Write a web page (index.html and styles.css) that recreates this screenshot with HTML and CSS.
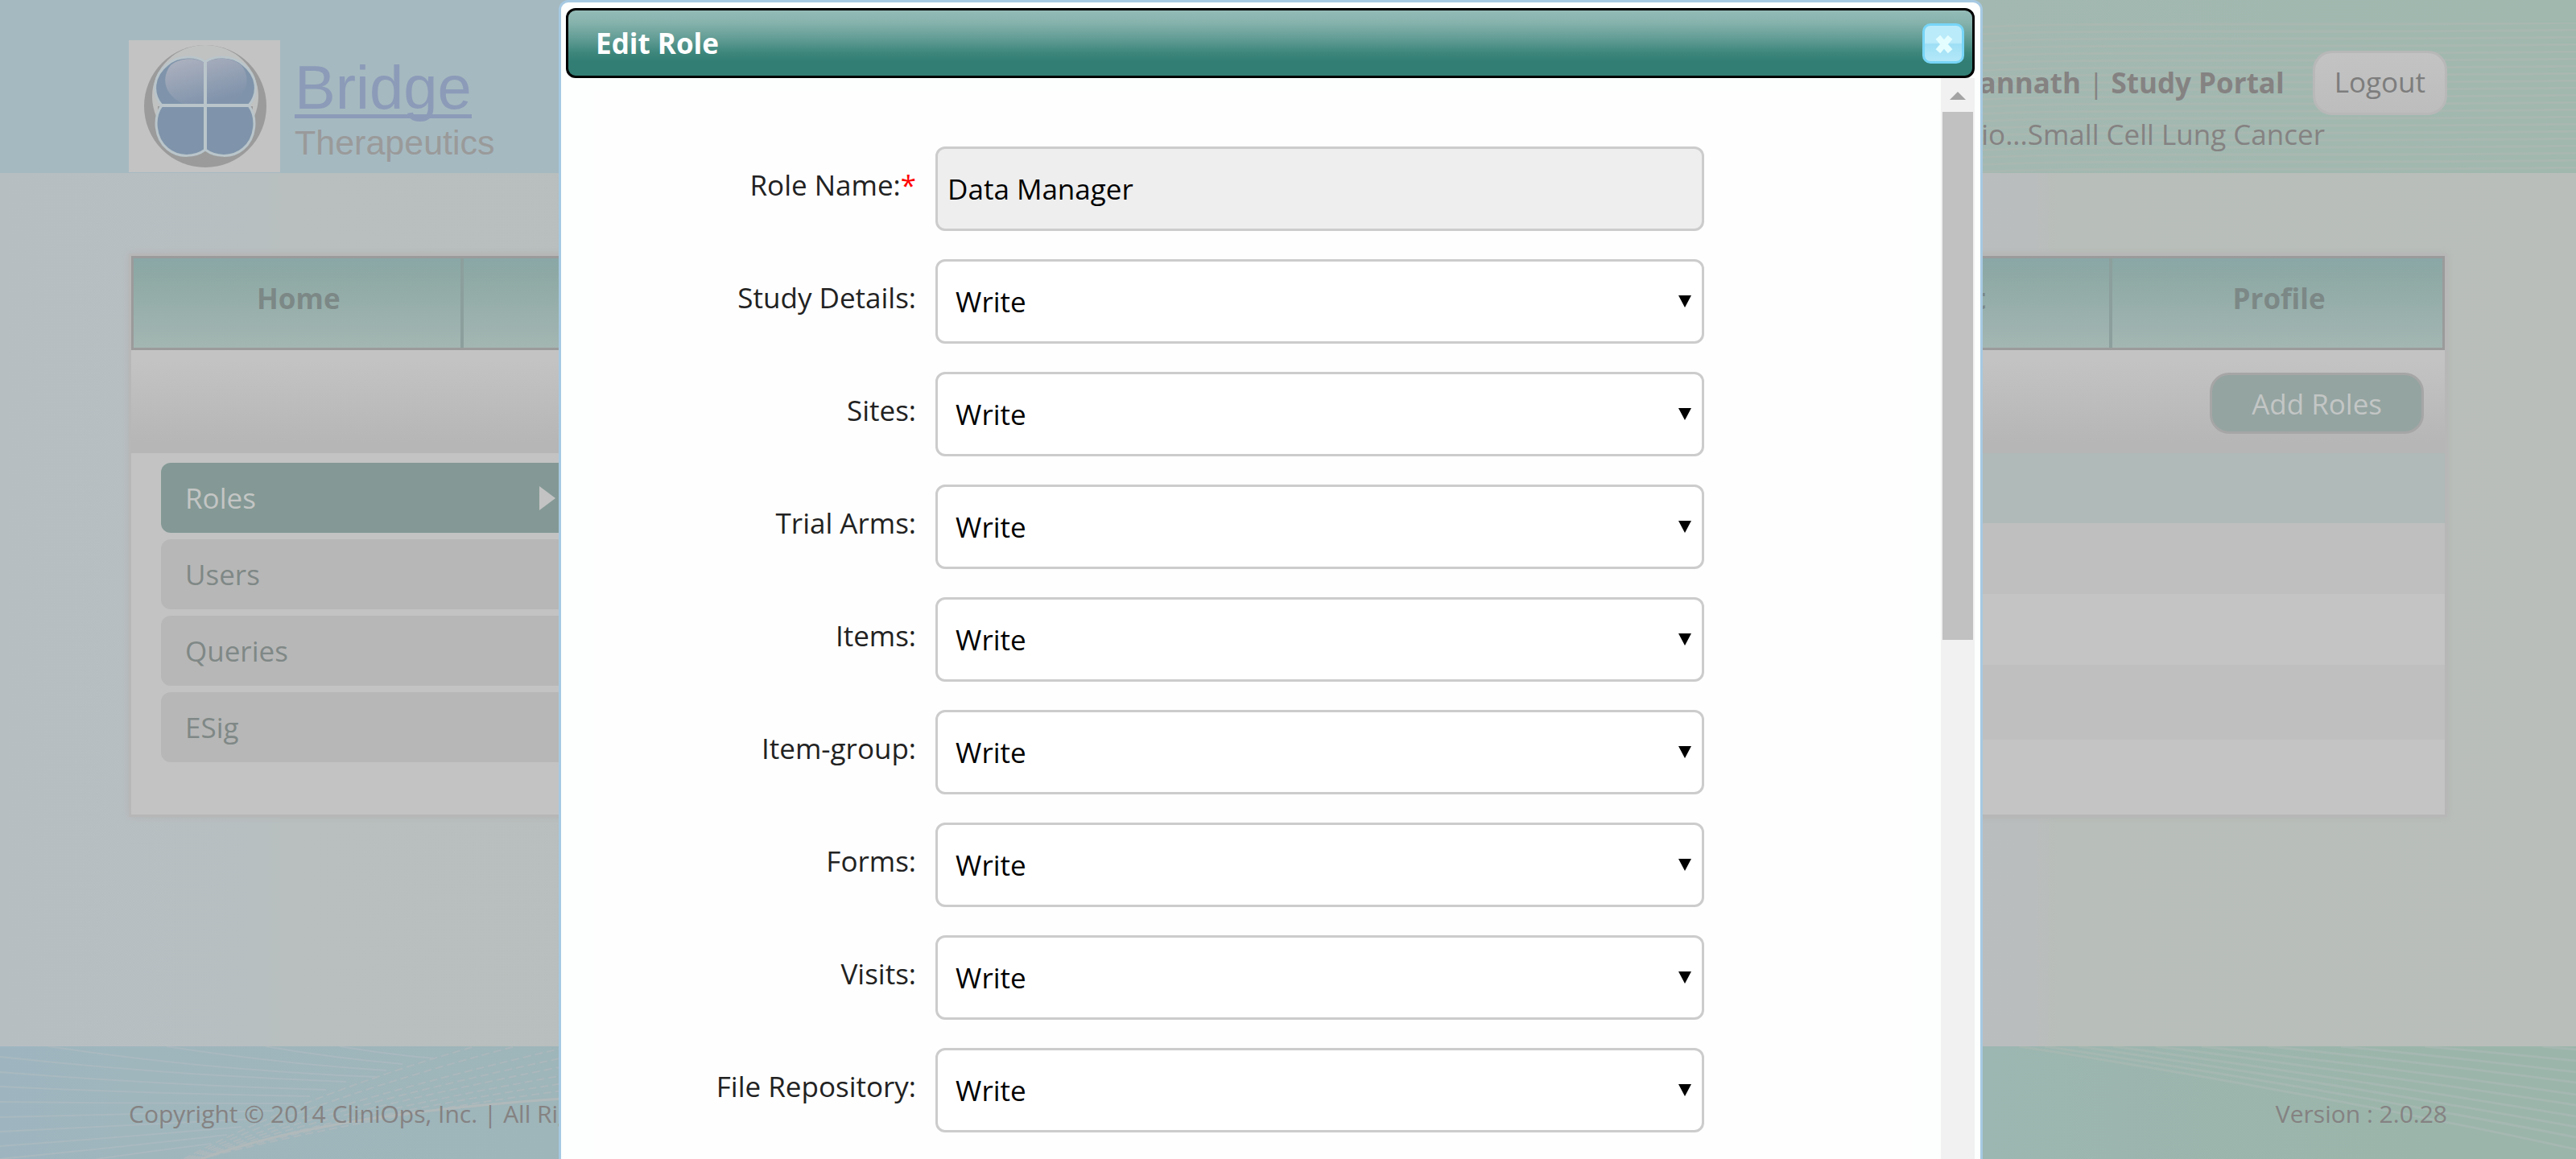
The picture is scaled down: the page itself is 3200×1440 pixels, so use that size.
FILE: index.html
```html
<!DOCTYPE html>
<html lang="en">
<head>
<meta charset="utf-8">
<title>Edit Role</title>
<link rel="stylesheet" href="styles.css">
</head>
<body>
<div class="page">
  <header class="site-header">
    <svg class="header-lines" viewBox="0 0 740 215" preserveAspectRatio="none" aria-hidden="true">
      <defs>
        <pattern id="ripple" width="740" height="9" patternUnits="userSpaceOnUse">
          <path d="M0 8 C80 3 180 3 340 3 S640 3 740 1" fill="none" stroke="#a9b8b1" stroke-width="3"/>
        </pattern>
      </defs>
      <rect y="28" width="740" height="187" fill="url(#ripple)"/>
    </svg>
    <a class="logo" href="#">
      <svg class="logo-mark" viewBox="0 0 188 164" aria-hidden="true">
        <defs>
          <linearGradient id="gloss" x1="0" y1="0" x2="0.5" y2="1">
            <stop offset="0" stop-color="#afb3c0"/>
            <stop offset="1" stop-color="#8093ab"/>
          </linearGradient>
        </defs>
        <rect width="188" height="164" fill="#c3c3c3"/>
        <circle cx="95" cy="82" r="76" fill="#9b9b9b"/>
        <ellipse cx="95" cy="70" rx="66" ry="64" fill="#c0c1c1"/>
        <path d="M36 82 H154 V100 L95 150 L36 100 Z" fill="#9b9b9b"/>
        <path d="M95 27 C85 19 62 18 48 30 C30 44 28 66 41 81 C30 96 32 122 48 135 C62 147 83 145 95 136 C107 145 128 147 142 135 C158 122 160 96 149 81 C162 66 160 44 142 30 C128 18 105 19 95 27 Z" fill="#7f94aa" stroke="#b9c5ca" stroke-width="3"/>
        <path d="M95 29 C85 21 64 21 52 31 C40 46 43 68 68 79 H125 C146 70 153 48 140 31 C126 20 105 21 95 29 Z" fill="url(#gloss)"/>
        <path d="M95 27 V136 M41 81 H149" stroke="#b9c5ca" stroke-width="4"/>
      </svg>
      <span class="wordmark">
        <span class="wordmark-name">Bridge</span>
        <span class="wordmark-sub">Therapeutics</span>
      </span>
    </a>
    <div class="account">
      <div class="account-row">
        <p class="account-user"><b>Jagannath</b> | <b>Study Portal</b></p>
        <button class="logout" type="button">Logout</button>
      </div>
      <p class="account-study">Bio...Small Cell Lung Cancer</p>
    </div>
  </header>

  <main class="content">
    <div class="panel">
      <nav class="tabs">
        <a href="#">Home</a><a href="#"></a><a href="#"></a><a href="#"></a><a href="#"></a><a href="#">Audit</a><a href="#">Profile</a>
      </nav>
      <div class="toolbar"><button class="add" type="button">Add Roles</button></div>
      <div class="columns">
        <ul class="side">
          <li><a class="active" href="#">Roles<span class="pointer"></span></a></li>
          <li><a href="#">Users</a></li>
          <li><a href="#">Queries</a></li>
          <li><a href="#">ESig</a></li>
        </ul>
        <div class="grid">
          <div class="grid-head"></div>
          <div class="grid-row odd"></div>
          <div class="grid-row"></div>
          <div class="grid-row tall odd"></div>
          <div class="grid-row tall"></div>
        </div>
      </div>
    </div>
  </main>

  <footer class="site-footer">
    <svg class="footer-lines" viewBox="0 0 3200 140" preserveAspectRatio="none" aria-hidden="true">
      <g fill="none" stroke="#a9b9bf" stroke-width="2">
        <path d="M422 0 Q480 10 540 15"/>
        <path d="M330 0 Q410 14 500 22"/>
        <path d="M207 0 Q340 21 480 30"/>
        <path d="M60 0 Q260 30 468 38"/>
        <path d="M0 13 Q210 36 430 44"/>
        <path d="M0 32 Q200 48 405 54"/>
        <path d="M0 50 Q190 59 385 62"/>
        <path d="M0 69 Q180 71 365 71"/>
        <path d="M0 88 Q160 84 340 80"/>
        <path d="M0 106 Q150 99 320 90"/>
        <path d="M0 124 Q140 114 300 100"/>
        <path d="M0 140 Q140 126 282 110"/>
        <path d="M120 140 Q190 130 262 121"/>
      </g>
      <g fill="none" stroke="#abb8bc" stroke-width="2" stroke-dasharray="10 5">
        <path d="M228 140 Q380 60 590 0"/>
        <path d="M231 140 Q390 66 640 0"/>
        <path d="M234 140 Q400 72 700 2"/>
        <path d="M237 140 Q410 76 700 14"/>
        <path d="M240 140 Q420 80 700 25"/>
        <path d="M243 140 Q430 84 700 36"/>
        <path d="M246 140 Q440 86 700 46"/>
        <path d="M248 140 Q450 88 700 55"/>
      </g>
      <path d="M250 140 Q400 85 700 65" fill="none" stroke="#b1b9ba" stroke-width="3"/>
      <g fill="none" stroke="#a5b8b1" stroke-width="3">
        <path d="M2508 0 Q2900 62 3200 128"/>
        <path d="M2540 0 Q2900 54 3200 113"/>
        <path d="M2582 0 Q2900 46 3200 100"/>
        <path d="M2625 0 Q2920 40 3200 87"/>
        <path d="M2678 0 Q2940 33 3200 73"/>
        <path d="M2735 0 Q2970 26 3200 60"/>
        <path d="M2818 0 Q3010 20 3200 45"/>
        <path d="M2908 0 Q3050 14 3200 32"/>
        <path d="M3012 0 Q3100 8 3200 18"/>
        <path d="M3158 0 L3200 4"/>
      </g>
    </svg>
    <p>Copyright © 2014 CliniOps, Inc. | All Rights Reserved</p>
    <p>Version : 2.0.28</p>
  </footer>
</div>

<div class="overlay">
  <section class="dialog" role="dialog" aria-labelledby="dialog-title">
    <div class="dialog-title">
      <h1 id="dialog-title">Edit Role</h1>
      <button class="close" type="button" aria-label="Close">
        <svg viewBox="0 0 24 24" aria-hidden="true"><path d="M5 4 L19 20 M19 4 L5 20" stroke="#e4fdff" stroke-width="7"/></svg>
      </button>
    </div>
    <div class="dialog-body">
      <form class="form">
        <div class="field">
          <label for="role-name">Role Name:<span class="required">*</span></label>
          <input id="role-name" type="text" value="Data Manager" readonly>
        </div>
        <div class="field">
          <label for="study-details">Study Details:</label>
          <div class="select"><select id="study-details"><option>Write</option></select></div>
        </div>
        <div class="field">
          <label for="sites">Sites:</label>
          <div class="select"><select id="sites"><option>Write</option></select></div>
        </div>
        <div class="field">
          <label for="trial-arms">Trial Arms:</label>
          <div class="select"><select id="trial-arms"><option>Write</option></select></div>
        </div>
        <div class="field">
          <label for="items">Items:</label>
          <div class="select"><select id="items"><option>Write</option></select></div>
        </div>
        <div class="field">
          <label for="item-group">Item-group:</label>
          <div class="select"><select id="item-group"><option>Write</option></select></div>
        </div>
        <div class="field">
          <label for="forms">Forms:</label>
          <div class="select"><select id="forms"><option>Write</option></select></div>
        </div>
        <div class="field">
          <label for="visits">Visits:</label>
          <div class="select"><select id="visits"><option>Write</option></select></div>
        </div>
        <div class="field">
          <label for="file-repository">File Repository:</label>
          <div class="select"><select id="file-repository"><option>Write</option></select></div>
        </div>
      </form>
      <div class="scrollbar" aria-hidden="true">
        <span class="scroll-up"></span>
        <span class="scroll-thumb"></span>
      </div>
    </div>
  </section>
</div>
</body>
</html>
```
FILE: styles.css
```css
* {
  box-sizing: border-box;
}

body {
  margin: 0;
  font-family: "Open Sans", "Noto Sans", sans-serif;
  font-size: 35px;
  color: #7f8685;
}

p,
h1,
ul {
  margin: 0;
  padding: 0;
}

button,
input,
select {
  font: inherit;
}

a {
  color: inherit;
  text-decoration: none;
}

.page {
  display: flex;
  flex-direction: column;
  min-height: 100vh;
  background: linear-gradient(90deg, #b7bec2 0%, #b8bfc1 10%, #b8bfbe 11%, #babdbd 79%, #b8beb9 80%, #b9beba 100%);
}

/* Header */

.site-header {
  position: relative;
  display: flex;
  justify-content: space-between;
  height: 215px;
  padding: 50px 5% 0;
  background: linear-gradient(90deg, #a5b9c0, #a5b9c0 22%, #a2b8b1 77%, #a0b8ae);
}

.header-lines {
  position: absolute;
  top: 0;
  right: 0;
  width: 24%;
  height: 100%;
}

.logo {
  display: flex;
  gap: 18px;
}

.logo-mark {
  width: 188px;
  height: 164px;
}

.wordmark {
  display: flex;
  flex-direction: column;
  align-items: flex-start;
  padding-top: 21px;
  font-family: "Liberation Sans", Arial, sans-serif;
}

.wordmark-name {
  height: 76px;
  border-bottom: 5px solid #8b9bb8;
  font-size: 76px;
  line-height: 76px;
  color: #8b9bb8;
}

.wordmark-sub {
  font-size: 43px;
  line-height: 60px;
  color: #9a9a9a;
}

.account {
  position: relative;
  padding-top: 13px;
  color: #858282;
}

.account-row {
  display: flex;
  align-items: center;
  justify-content: flex-end;
  gap: 35px;
}

.account-user,
.account-study {
  line-height: 48px;
}

.account-study {
  padding-right: 152px;
  text-align: right;
}

.logout {
  height: 80px;
  padding: 0 24px 3px;
  border: 3px solid #b8b8b8;
  border-radius: 24px;
  background: linear-gradient(#c3c3c3, #bdbdbd);
  color: #7d7d7d;
}

/* Panel */

.content {
  flex: 1;
  padding: 100px 5% 0;
}

.panel {
  border: 3px solid #b7b7b7;
  background: #c3c3c3;
  box-shadow: 0 0 8px #b3b3b3;
}

.tabs {
  display: grid;
  grid-template-columns: repeat(7, 1fr);
  height: 117px;
  border: 3px solid #9b9b9b;
  background: linear-gradient(#8aa7a7, #8ea9a5 18%, #a3b6b2);
  font-weight: bold;
  text-align: center;
}

.tabs a {
  padding: 26px 0 0 4px;
  border-right: 4px solid #8c9f9c;
  line-height: 48px;
  color: #7c8886;
}

.tabs a:last-child {
  border-right: 0;
}

.toolbar {
  display: flex;
  justify-content: flex-end;
  height: 128px;
  padding: 28px 26px 24px;
  background: linear-gradient(#c3c3c3 10%, #b6b6b6 90%);
}

.add {
  padding: 0 49px;
  border: 3px solid #a6a6a6;
  border-radius: 24px;
  background: #94a4a1;
  color: #c3c6c5;
}

.columns {
  display: grid;
  grid-template-columns: 19% 1fr;
}

.side {
  display: flex;
  flex-direction: column;
  gap: 8px;
  padding: 12px 0 0 37px;
  list-style: none;
}

.side a {
  display: flex;
  align-items: center;
  justify-content: space-between;
  height: 87px;
  padding: 0 19px 0 30px;
  border-radius: 12px;
  background: #b7b7b7;
  color: #7f8886;
}

.side .active {
  background: #849995;
  color: #c3c5c4;
}

.pointer {
  border: 15px solid transparent;
  border-right: 0;
  border-left: 20px solid #c3c3c3;
}

.grid-head {
  height: 87px;
  background: #b0bab8;
}

.grid-row {
  height: 88px;
  background: #c4c4c4;
}

.tall {
  height: 93px;
}

.odd {
  background: #bfbfbf;
}

/* Footer */

.site-footer {
  position: relative;
  display: flex;
  justify-content: space-between;
  height: 140px;
  padding: 63px 5% 0;
  background: linear-gradient(90deg, #9eb5c0, #9fb6bd 5%, #9eb5b9 22%, #9cb6b1 77%, #9bb5aa 95%);
  font-size: 30px;
  line-height: 42px;
  color: #858282;
}

.site-footer p {
  position: relative;
}

.footer-lines {
  position: absolute;
  inset: 0;
  width: 100%;
  height: 100%;
}

/* Dialog */

.overlay {
  position: fixed;
  inset: 0;
  overflow: hidden;
}

.dialog {
  display: flex;
  flex-direction: column;
  width: 55.28%;
  height: 110%;
  margin-left: 21.69%;
  padding: 7px 7px 0 6px;
  border: 3px solid #a6c9e2;
  border-radius: 12px;
  background: #fcfffd;
}

.dialog-title {
  display: flex;
  flex: none;
  align-items: center;
  justify-content: space-between;
  height: 87px;
  padding: 0 10px 0 34px;
  border: 3px solid #000;
  border-radius: 12px;
  background: linear-gradient(#93bbb7, #87b3ad 18%, #5f9b93 45%, #3d867c 65%, #327e74 78%);
}

.dialog-title h1 {
  font-size: 35px;
  line-height: 48px;
  color: #fff;
}

.close {
  display: grid;
  place-items: center;
  width: 52px;
  height: 50px;
  padding: 2px 0 0 2px;
  border: 3px solid #77d5f7;
  border-radius: 10px;
  background: linear-gradient(#baebfa 48%, #9edff5 52%, #b4e8f9);
}

.close svg {
  width: 26px;
  height: 26px;
}

.dialog-body {
  display: flex;
  flex: 1;
  padding-left: 35px;
}

.form {
  display: flex;
  flex: 1;
  flex-direction: column;
  gap: 35px;
  margin: 16px 35px 0 0;
  padding-top: 69px;
  background: #fefefe;
}

.field {
  display: grid;
  grid-template-columns: 400fr 955fr 235fr;
  column-gap: 24px;
}

.field label {
  padding-top: 24px;
  line-height: 48px;
  text-align: right;
  color: #222;
}

.required {
  color: #f00;
}

.field input,
.field select {
  width: 100%;
  height: 105px;
  border: 3px solid #ccc;
  border-radius: 12px;
  background: #fff;
  color: #000;
}

.field input {
  padding: 0 12px;
  background: #eee;
}

.field select {
  padding: 0 22px;
  appearance: none;
}

.select {
  position: relative;
}

.select::after {
  content: "";
  position: absolute;
  top: 45px;
  right: 16px;
  border: 8px solid transparent;
  border-top: 15px solid #000;
  border-bottom: 0;
  pointer-events: none;
}

.scrollbar {
  display: flex;
  flex-direction: column;
  align-items: center;
  width: 42px;
  background: #f1f1f1;
}

.scroll-up {
  margin: 17px 0 15px;
  border: 10px solid transparent;
  border-top: 0;
  border-bottom-color: #a3a3a3;
}

.scroll-thumb {
  width: 38px;
  height: 656px;
  background: #c1c1c1;
}
```
